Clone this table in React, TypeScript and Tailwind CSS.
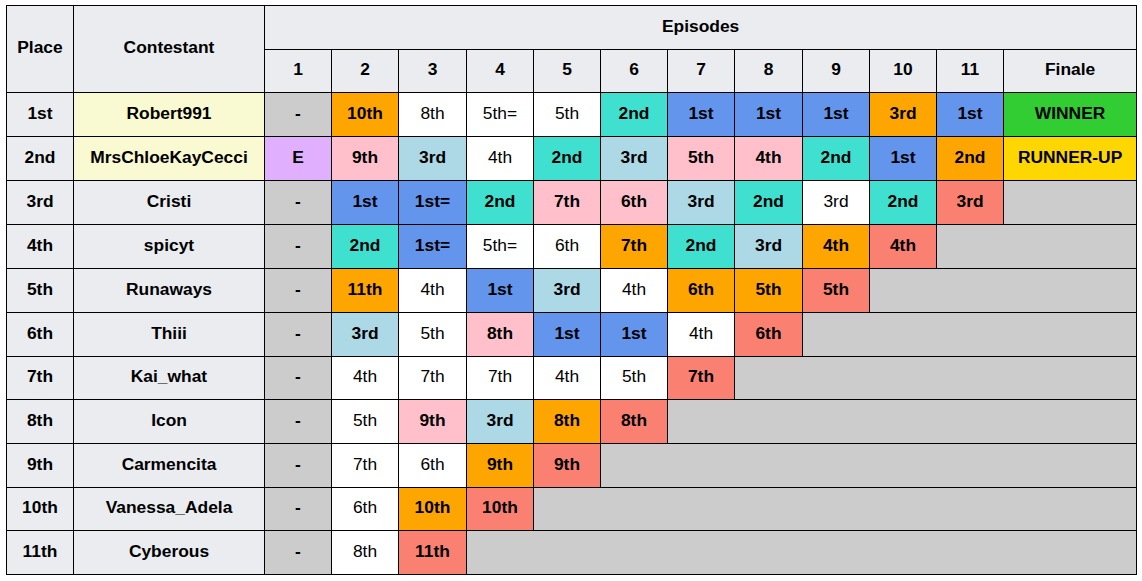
import React from "react";

type Cell = { t: string; c: string; b?: boolean; span?: number };

const O = "bg-[#ffa500]";
const B = "bg-[#6495ed]";
const T = "bg-[#40e0d0]";
const L = "bg-[#add8e6]";
const P = "bg-[#ffc0cb]";
const S = "bg-[#fa8072]";
const W = "bg-white";
const G = "bg-[#cccccc]";
const E = "bg-[#e0b0ff]";

const c = (t: string, col: string): Cell => ({ t, c: col, b: col !== W });

const rows: { place: string; name: string; hl?: boolean; h: string; cells: Cell[] }[] = [
  {
    place: "1st",
    name: "Robert991",
    hl: true,
    h: "h-[44px]",
    cells: [
      c("-", G), c("10th", O), c("8th", W), c("5th=", W), c("5th", W), c("2nd", T), c("1st", B), c("1st", B), c("1st", B), c("3rd", O), c("1st", B),
      { t: "WINNER", c: "bg-[#32cd32]", b: true },
    ],
  },
  {
    place: "2nd",
    name: "MrsChloeKayCecci",
    hl: true,
    h: "h-[44px]",
    cells: [
      c("E", E), c("9th", P), c("3rd", L), c("4th", W), c("2nd", T), c("3rd", L), c("5th", P), c("4th", P), c("2nd", T), c("1st", B), c("2nd", O),
      { t: "RUNNER-UP", c: "bg-[#ffd700]", b: true },
    ],
  },
  {
    place: "3rd",
    name: "Cristi",
    h: "h-[44px]",
    cells: [
      c("-", G), c("1st", B), c("1st=", B), c("2nd", T), c("7th", P), c("6th", P), c("3rd", L), c("2nd", T), c("3rd", W), c("2nd", T), c("3rd", S),
      { t: "", c: G, span: 1 },
    ],
  },
  {
    place: "4th",
    name: "spicyt",
    h: "h-[44px]",
    cells: [
      c("-", G), c("2nd", T), c("1st=", B), c("5th=", W), c("6th", W), c("7th", O), c("2nd", T), c("3rd", L), c("4th", O), c("4th", S),
      { t: "", c: G, span: 2 },
    ],
  },
  {
    place: "5th",
    name: "Runaways",
    h: "h-[44px]",
    cells: [
      c("-", G), c("11th", O), c("4th", W), c("1st", B), c("3rd", L), c("4th", W), c("6th", O), c("5th", O), c("5th", S),
      { t: "", c: G, span: 3 },
    ],
  },
  {
    place: "6th",
    name: "Thiii",
    h: "h-[44px]",
    cells: [
      c("-", G), c("3rd", L), c("5th", W), c("8th", P), c("1st", B), c("1st", B), c("4th", W), c("6th", S),
      { t: "", c: G, span: 4 },
    ],
  },
  {
    place: "7th",
    name: "Kai_what",
    h: "h-[43px]",
    cells: [
      c("-", G), c("4th", W), c("7th", W), c("7th", W), c("4th", W), c("5th", W), c("7th", S),
      { t: "", c: G, span: 5 },
    ],
  },
  {
    place: "8th",
    name: "Icon",
    h: "h-[44px]",
    cells: [
      c("-", G), c("5th", W), c("9th", P), c("3rd", L), c("8th", O), c("8th", S),
      { t: "", c: G, span: 6 },
    ],
  },
  {
    place: "9th",
    name: "Carmencita",
    h: "h-[44px]",
    cells: [
      c("-", G), c("7th", W), c("6th", W), c("9th", O), c("9th", S),
      { t: "", c: G, span: 7 },
    ],
  },
  {
    place: "10th",
    name: "Vanessa_Adela",
    h: "h-[43px]",
    cells: [
      c("-", G), c("6th", W), c("10th", O), c("10th", S),
      { t: "", c: G, span: 8 },
    ],
  },
  {
    place: "11th",
    name: "Cyberous",
    h: "h-[44px]",
    cells: [
      c("-", G), c("8th", W), c("11th", S),
      { t: "", c: G, span: 9 },
    ],
  },
];

const epWidths = [67, 67, 68, 67, 67, 67, 67, 68, 67, 67, 67];

export default function App() {
  const bd = "border border-black pb-[2px] px-0 pt-0";
  return (
    <div className="min-h-[581px] w-[1142px] bg-white pl-[6px] pt-[5px]" style={{ fontFamily: '"Liberation Sans", Arial, sans-serif' }}>
      <table className="table-fixed border-collapse text-[17.4px] leading-none text-black w-[1131px]">
        <colgroup>
          <col className="w-[67px]" />
          <col className="w-[191px]" />
          {epWidths.map((w, i) => (
            <col key={i} style={{ width: w }} />
          ))}
          <col className="w-[133px]" />
        </colgroup>
        <thead>
          <tr className="h-[44px]">
            <th rowSpan={2} className={`${bd} bg-[#eaecf0] font-bold text-center`}>Place</th>
            <th rowSpan={2} className={`${bd} bg-[#eaecf0] font-bold text-center`}>Contestant</th>
            <th colSpan={12} className={`${bd} bg-[#eaecf0] font-bold text-center`}>Episodes</th>
          </tr>
          <tr className="h-[43px]">
            {Array.from({ length: 11 }, (_, i) => (
              <th key={i} className={`${bd} bg-[#eaecf0] font-bold text-center`}>{i + 1}</th>
            ))}
            <th className={`${bd} bg-[#eaecf0] font-bold text-center`}>Finale</th>
          </tr>
        </thead>
        <tbody>
          {rows.map((r, ri) => (
            <tr key={ri} className={r.h}>
              <td className={`${bd} bg-[#eaecf0] font-bold text-center`}>{r.place}</td>
              <td className={`${bd} ${r.hl ? "bg-[#fafad2]" : "bg-[#eaecf0]"} font-bold text-center`}>{r.name}</td>
              {r.cells.map((cell, ci) => (
                <td
                  key={ci}
                  colSpan={cell.span ?? 1}
                  className={`${bd} ${cell.c} ${cell.b ? "font-bold" : "font-normal"} text-center`}
                >
                  {cell.t}
                </td>
              ))}
            </tr>
          ))}
        </tbody>
      </table>
    </div>
  );
}
